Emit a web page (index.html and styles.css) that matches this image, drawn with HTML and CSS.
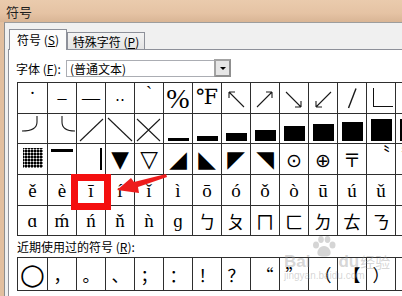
FILE: index.html
```html
<!DOCTYPE html>
<html lang="zh">
<head>
<meta charset="utf-8">
<title>符号</title>
<link rel="stylesheet" href="styles.css">
</head>
<body>
<div class="window">
  <div class="titlebar">符号</div>
  <div class="frame">
    <div class="client">
      <div class="tabs">
        <div class="tab active">符号 (<u>S</u>)</div>
        <div class="tab">特殊字符 (<u>P</u>)</div>
      </div>
      <div class="panel">
        <div class="font-row">
          <span class="label">字体 (<u>F</u>):</span>
          <div class="select"><span class="value">(普通文本)</span><span class="drop"><span class="tri-down"></span></span></div>
        </div>
        <div class="grid">
          <!-- row 1 -->
          <div class="c top"><span class="dot">·</span></div>
          <div class="c">–</div>
          <div class="c">—</div>
          <div class="c sym">‥</div>
          <div class="c top"><span class="grave">ˋ</span></div>
          <div class="c pct">%</div>
          <div class="c fahr">℉</div>
          <div class="c"><svg width="28" height="30" viewBox="0 0 28 30"><path d="M7 9L22 24M7 9h6M7 9v6" class="ln"/></svg></div>
          <div class="c"><svg width="28" height="30" viewBox="0 0 28 30"><path d="M6 24L21 9M21 9h-6M21 9v6" class="ln"/></svg></div>
          <div class="c"><svg width="28" height="30" viewBox="0 0 28 30"><path d="M6 9L21 24M21 24h-6M21 24v-6" class="ln"/></svg></div>
          <div class="c"><svg width="28" height="30" viewBox="0 0 28 30"><path d="M22 9L7 24M7 24h6M7 24v-6" class="ln"/></svg></div>
          <div class="c"><svg width="28" height="30" viewBox="0 0 28 30"><path d="M10.5 25L18 5.5" class="ln thick"/></svg></div>
          <div class="c top"><span class="angle"></span></div>
          <div class="c sym">∣</div>
          <!-- row 2 -->
          <div class="c"><svg width="29" height="29" viewBox="0 0 29 29"><path d="M19 2V8Q19 17 4 17" class="ln"/></svg></div>
          <div class="c"><svg width="28" height="29" viewBox="0 0 28 29"><path d="M14 2V8Q14 17 27 17" class="ln"/></svg></div>
          <div class="c"><svg width="28" height="29" viewBox="0 0 28 29"><path d="M3 27L26 5" class="ln"/></svg></div>
          <div class="c"><svg width="28" height="29" viewBox="0 0 28 29"><path d="M2 4L26 27" class="ln"/></svg></div>
          <div class="c"><svg width="28" height="29" viewBox="0 0 28 29"><path d="M2 5L25 27M25 5L2 27" class="ln"/></svg></div>
          <div class="c bar"><span class="h3"></span></div>
          <div class="c bar"><span class="h5"></span></div>
          <div class="c bar"><span class="h8"></span></div>
          <div class="c bar"><span class="h11"></span></div>
          <div class="c bar"><span class="h15"></span></div>
          <div class="c bar"><span class="h17"></span></div>
          <div class="c bar"><span class="h19"></span></div>
          <div class="c bar"><span class="h22"></span></div>
          <div class="c bar"><span class="b78"></span></div>
          <!-- row 3 -->
          <div class="c topc"><span class="shade"></span></div>
          <div class="c topc"><span class="overbar"></span></div>
          <div class="c topc right"><span class="vbar"></span></div>
          <div class="c tri">▼</div>
          <div class="c tri">▽</div>
          <div class="c tri">◢</div>
          <div class="c tri">◣</div>
          <div class="c tri">◤</div>
          <div class="c tri">◥</div>
          <div class="c circ">⊙</div>
          <div class="c circ">⊕</div>
          <div class="c cjk">〒</div>
          <div class="c top"><span class="quote">〝</span></div>
          <div class="c top"><span class="quote">〞</span></div>
          <!-- row 4 -->
          <div class="c let">ě</div>
          <div class="c let">è</div>
          <div class="c let">ī</div>
          <div class="c let">í</div>
          <div class="c let">ǐ</div>
          <div class="c let">ì</div>
          <div class="c let">ō</div>
          <div class="c let">ó</div>
          <div class="c let">ǒ</div>
          <div class="c let">ò</div>
          <div class="c let">ū</div>
          <div class="c let">ú</div>
          <div class="c let">ǔ</div>
          <div class="c let">ù</div>
          <!-- row 5 -->
          <div class="c let">ɑ</div>
          <div class="c let">ḿ</div>
          <div class="c let">ń</div>
          <div class="c let">ň</div>
          <div class="c let">ǹ</div>
          <div class="c let">ɡ</div>
          <div class="c cjk">ㄅ</div>
          <div class="c cjk">ㄆ</div>
          <div class="c cjk">ㄇ</div>
          <div class="c cjk">ㄈ</div>
          <div class="c cjk">ㄉ</div>
          <div class="c cjk">ㄊ</div>
          <div class="c cjk">ㄋ</div>
          <div class="c cjk">ㄌ</div>
        </div>
        <div class="recent-label">近期使用过的符号 (<u>R</u>):</div>
        <div class="grid recent">
          <div class="c ring">○</div>
          <div class="c punct">，</div>
          <div class="c punct">。</div>
          <div class="c punct">、</div>
          <div class="c punct">；</div>
          <div class="c punct">：</div>
          <div class="c punct">！</div>
          <div class="c punct">？</div>
          <div class="c punct">“</div>
          <div class="c punct">”</div>
          <div class="c punct">（</div>
          <div class="c punct">【</div>
          <div class="c punct">）</div>
          <div class="c"></div>
        </div>
      </div>
    </div>
  </div>

  <div class="highlight"></div>
  <svg class="arrow-mark" width="60" height="30" viewBox="0 0 60 30">
    <polygon points="49,0 50,3 21,13 22,19 0,16 14,4 17,8" fill="#ee1c1c"/>
  </svg>

  <div class="watermark">
    <div class="wm-top">
      <span class="wm-bai">Bai</span>
      <svg class="paw" width="26" height="22" viewBox="0 0 26 22">
        <ellipse cx="5" cy="9" rx="3" ry="3.6"/>
        <ellipse cx="10" cy="3.5" rx="2.8" ry="3.4"/>
        <ellipse cx="16.5" cy="3.5" rx="2.8" ry="3.4"/>
        <ellipse cx="21.5" cy="9" rx="3" ry="3.6"/>
        <path d="M13 10C8 10 5 16 7 19C9 21 17 21 19 19C21 16 18 10 13 10Z"/>
      </svg>
      <span class="wm-bai">du</span>
      <span class="wm-cn">经验</span>
    </div>
    <div class="wm-url">jingyan.baidu.com</div>
  </div>
</div>
</body>
</html>
```
FILE: styles.css
```css
* { box-sizing: border-box; margin: 0; padding: 0; }
html, body { width: 402px; height: 296px; overflow: hidden; }
body {
  font-family: "Noto Sans CJK SC", "Noto Sans", sans-serif;
  font-size: 12px;
  color: #000;
  background: #fff;
}
u { text-decoration: underline; text-underline-offset: 1px; }

.window {
  position: relative;
  width: 402px;
  height: 296px;
  display: flex;
  flex-direction: column;
  overflow: hidden;
  background: #dcb898;
}
.titlebar {
  flex: none;
  height: 22px;
  padding-left: 6px;
  display: flex;
  align-items: center;
  font-size: 13px;
  line-height: 1;
  color: #1e1e1e;
  background: linear-gradient(#eacbad, #e5c3a4 60%, #d9b595);
}
.frame {
  flex: 1;
  display: flex;
  padding-left: 4px;
  min-height: 0;
  background: linear-gradient(90deg, #e2bf9f, #d8b493);
}
.client {
  flex: 1;
  min-width: 0;
  display: flex;
  flex-direction: column;
  border-left: 1px solid #8e8e8e;
  border-top: 1px solid #9d9d9d;
  background: #f0f0f0;
  padding-left: 3px;
}

/* tabs */
.tabs {
  flex: none;
  height: 26px;
  display: flex;
  align-items: flex-end;
  padding-left: 1px;
}
.tab {
  height: 17px;
  width: 78px;
  display: flex;
  align-items: center;
  justify-content: center;
  border: 1px solid #8d9099;
  border-bottom: none;
  background: linear-gradient(#f3f3f3, #e4e4e4);
  font-size: 12px;
  line-height: 1;
  padding-top: 1px;
}
.tab.active {
  position: relative;
  z-index: 1;
  height: 21px;
  width: 58px;
  margin-bottom: -1px;
  background: #fcfcfc;
  border-right: 1px solid #8d9099;
  padding-top: 0;
}

/* panel */
.panel {
  flex: 1;
  min-height: 0;
  overflow: hidden;
  background: #fff;
  border-left: 1px solid #8d9099;
  border-top: 1px solid #8d9099;
  padding-left: 7px;
  padding-top: 10px;
}
.font-row {
  height: 17px;
  display: flex;
  align-items: center;
}
.label {
  width: 50px;
  line-height: 1;
}
.select {
  width: 165px;
  height: 17px;
  display: flex;
  align-items: center;
  border: 1px solid #abadb3;
  background: #fff;
}
.select .value {
  flex: 1;
  padding-left: 3px;
  line-height: 1;
}
.drop {
  width: 17px;
  height: 18px;
  margin-top: -1px;
  margin-right: -1px;
  border: 2px solid #a3a3a3;
  border-right-color: #8f8f8f;
  border-bottom-color: #8f8f8f;
  background: #e6e6e6;
  display: flex;
  align-items: center;
  justify-content: center;
}
.tri-down {
  width: 0;
  height: 0;
  border-left: 3px solid transparent;
  border-right: 3px solid transparent;
  border-top: 3px solid #000;
}

/* symbol grid */
.grid {
  margin-top: 5px;
  margin-left: 1px;
  width: max-content;
  display: grid;
  grid-template-columns: 29px repeat(13, 28px);
  grid-template-rows: 30px 29px 30px 30px 29px;
  gap: 1px;
  padding: 1px;
  background: #2e2e2e;
}
.c {
  background: #fff;
  display: flex;
  align-items: center;
  justify-content: center;
  overflow: hidden;
  font-family: "Liberation Serif", "DejaVu Serif", "Noto Sans CJK SC", serif;
  font-size: 18px;
  line-height: 1;
  color: #000;
}
.c svg { display: block; }
.ln { fill: none; stroke: #1a1a1a; stroke-width: 1.1; }
.ln.thick { stroke-width: 1.4; }

.top { align-items: flex-start; }
.dot { margin-top: 1px; font-size: 18px; }
.grave { margin-top: 1px; font-size: 18px; }
.sym { font-family: "DejaVu Sans", sans-serif; font-size: 15px; padding-bottom: 3px; }
.pct { font-size: 28px; font-family: "Liberation Serif", serif; padding-top: 1px; }
.fahr { font-family: "Liberation Serif", "DejaVu Serif", serif; font-size: 21px; align-items: flex-start; padding-top: 4px; }
.angle {
  width: 20px;
  height: 19px;
  margin-top: 5px;
  margin-left: 3px;
  border-left: 1px solid #111;
  border-bottom: 1px solid #111;
}

.bar { align-items: flex-end; padding-bottom: 2px; }
.bar span { display: block; width: 21px; background: #000; }
.bar .h3 { height: 3px; }
.bar .h5 { height: 5px; }
.bar .h8 { height: 8px; }
.bar .h11 { height: 11px; }
.bar .h15 { height: 15px; }
.bar .h17 { height: 17px; }
.bar .h19 { height: 19px; }
.bar .h22 { height: 22px; }
.bar .b78 { height: 22px; width: 18px; margin-right: auto; margin-left: 4px; }

.topc { align-items: flex-start; }
.shade {
  margin-top: 4px;
  width: 20px;
  height: 20px;
  background: radial-gradient(circle, #fff 0.8px, transparent 1.2px) 0 0 / 3px 3px, #000;
}
.overbar { margin-top: 5px; width: 22px; height: 3px; background: #000; }
.right { justify-content: flex-end; }
.vbar { margin-top: 4px; margin-right: 3px; width: 2px; height: 22px; background: #000; }
.tri { font-family: "DejaVu Sans", sans-serif; font-size: 23px; }
.circ { font-family: "DejaVu Sans", sans-serif; font-size: 19px; padding-top: 2px; }
.cjk { font-family: "Noto Sans CJK TC", "Noto Sans CJK SC", sans-serif; font-size: 18px; }
.quote { font-family: "Noto Sans CJK SC", sans-serif; font-size: 18px; }
.let { font-family: "Liberation Serif", "DejaVu Serif", serif; font-size: 19px; }

.recent-label {
  margin-top: 5px;
  margin-left: 1px;
  height: 12px;
  line-height: 12px;
}
.grid.recent {
  margin-top: 4px;
  grid-template-rows: 32px;
}
.ring { font-family: "DejaVu Sans", sans-serif; font-size: 29px; }
.punct { font-family: "Noto Sans CJK SC", sans-serif; font-size: 17px; }

/* overlays */
.highlight {
  position: absolute;
  left: 71px;
  top: 174px;
  width: 40px;
  height: 36px;
  border: 7px solid #f40f0f;
}
.arrow-mark {
  position: absolute;
  left: 117px;
  top: 174px;
}
.watermark {
  position: absolute;
  left: 284px;
  top: 238px;
  color: rgba(150, 150, 150, 0.4);
  pointer-events: none;
}
.wm-top { display: flex; align-items: flex-end; height: 32px; }
.wm-bai { font-family: "Liberation Sans", sans-serif; font-size: 17px; font-weight: bold; line-height: 16px; }
.paw { fill: rgba(150, 150, 150, 0.4); margin: 0 1px 12px; }
.wm-cn { font-family: "Noto Sans CJK SC", sans-serif; font-size: 15px; line-height: 16px; margin-left: 1px; }
.wm-url { font-family: "Liberation Sans", sans-serif; font-size: 10px; line-height: 10px; margin-top: 1px; }
```
